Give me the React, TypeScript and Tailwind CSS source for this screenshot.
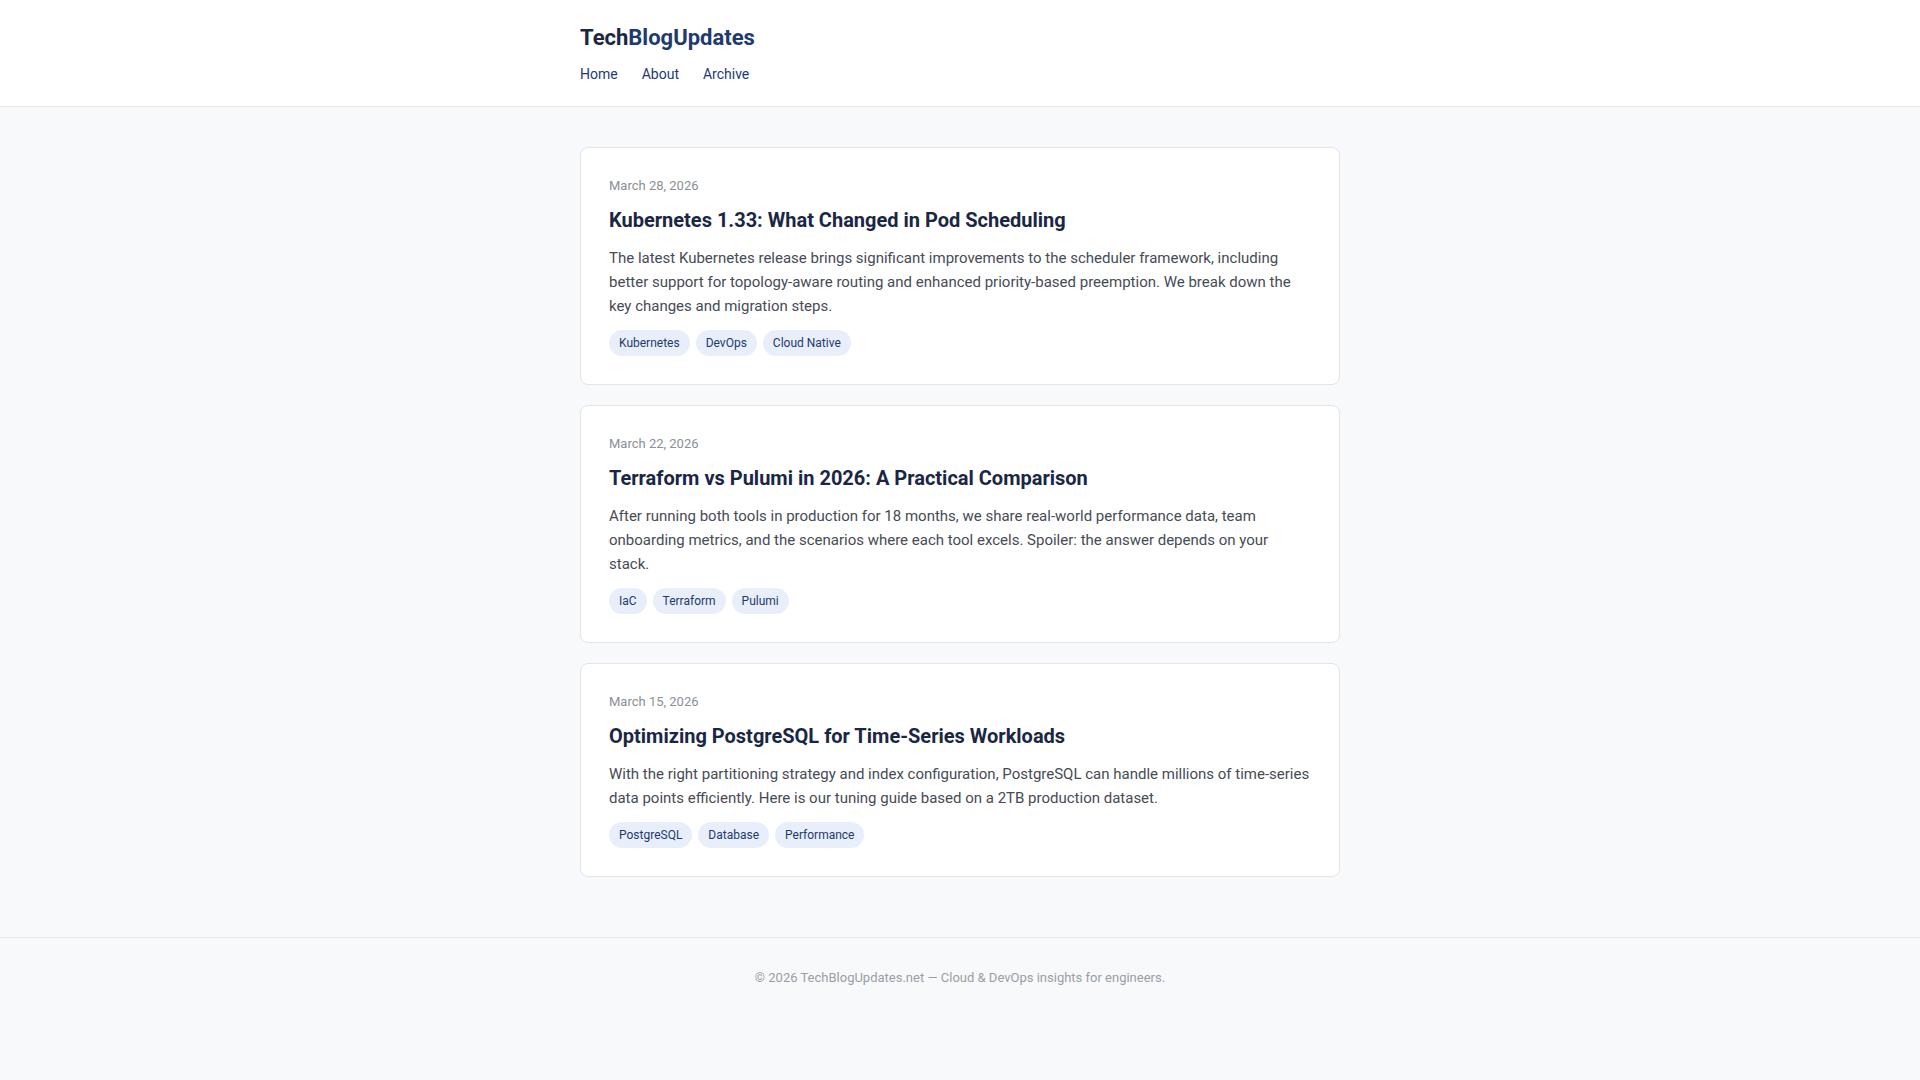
const posts = [
  {
    date: "March 28, 2026",
    title: "Kubernetes 1.33: What Changed in Pod Scheduling",
    excerpt:
      "The latest Kubernetes release brings significant improvements to the scheduler framework, including better support for topology-aware routing and enhanced priority-based preemption. We break down the key changes and migration steps.",
    tags: ["Kubernetes", "DevOps", "Cloud Native"],
  },
  {
    date: "March 22, 2026",
    title: "Terraform vs Pulumi in 2026: A Practical Comparison",
    excerpt:
      "After running both tools in production for 18 months, we share real-world performance data, team onboarding metrics, and the scenarios where each tool excels. Spoiler: the answer depends on your stack.",
    tags: ["IaC", "Terraform", "Pulumi"],
  },
  {
    date: "March 15, 2026",
    title: "Optimizing PostgreSQL for Time-Series Workloads",
    excerpt:
      "With the right partitioning strategy and index configuration, PostgreSQL can handle millions of time-series data points efficiently. Here is our tuning guide based on a 2TB production dataset.",
    tags: ["PostgreSQL", "Database", "Performance"],
  },
];

export default function App() {
  return (
    <div className="min-h-screen bg-[#f8f9fb] font-['Roboto',sans-serif]">
      <header className="bg-white border-b border-[#e5e7eb]">
        <div className="max-w-[760px] mx-auto pt-6 pb-[22px]">
          <h1 className="text-[22px] leading-7 font-bold">
            <span className="text-[#1a2744]">Tech</span>
            <span className="text-[#1e3a6e]">BlogUpdates</span>
          </h1>
          <nav className="flex gap-6 mt-3 text-[14px] leading-5 text-[#1e3a6e]">
            <a href="#">Home</a>
            <a href="#">About</a>
            <a href="#">Archive</a>
          </nav>
        </div>
      </header>

      <main className="max-w-[760px] mx-auto pt-10 pb-[60px] flex flex-col gap-5">
        {posts.map((post) => (
          <article key={post.title} className="bg-white border border-[#e3e5e9] rounded-lg p-7">
            <div className="text-[13px] leading-5 text-[#8a8f98]">{post.date}</div>
            <h2 className="mt-[10px] text-[20px] leading-7 font-bold text-[#1a2744]">{post.title}</h2>
            <p className="mt-3 text-[15px] leading-6 text-[#464b54]">{post.excerpt}</p>
            <div className="mt-3 flex gap-1.5">
              {post.tags.map((tag) => (
                <span key={tag}
                  className="bg-[#e8effb] text-[#1e3a6e] text-[12px] leading-[26px] px-2.5 rounded-full">
                  {tag}
                </span>
              ))}
            </div>
          </article>
        ))}
      </main>

      <footer className="border-t border-[#e5e7eb] pt-[30px] pb-[30px] text-center text-[13px] leading-5 text-[#9a9ea6]">
        © 2026 TechBlogUpdates.net — Cloud &amp; DevOps insights for engineers.
      </footer>
    </div>
  );
}
